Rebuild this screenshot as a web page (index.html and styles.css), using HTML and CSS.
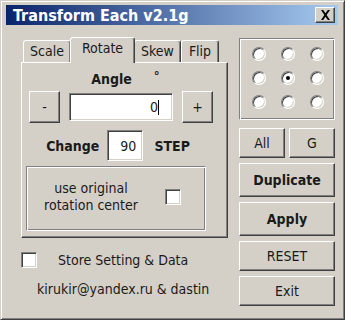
FILE: index.html
```html
<!DOCTYPE html>
<html lang="en">
<head>
  <meta charset="UTF-8">
  <title>Transform Each v2.1g</title>
  <link rel="stylesheet" href="styles.css">
</head>
<body>
  <div class="window">
    <!-- Barre de titre -->
    <div class="titlebar">
      <span class="title">Transform Each v2.1g</span>
      <span class="close">
        <svg width="11" height="10" viewBox="0 0 11 10"><path d="M1 0h2.2l2.3 3.3L7.8 0H10L6.6 5 10 10H7.8L5.5 6.7 3.2 10H1l3.4-5z" fill="#000"/></svg>
      </span>
    </div>

    <div class="content">
      <div class="left">
        <div class="tabs">
          <div class="tab tab-scale">Scale</div>
          <div class="tab active">Rotate</div>
          <div class="tab tab-skew">Skew</div>
          <div class="tab tab-flip">Flip</div>
        </div>
        <div class="pane">
          <div class="angle-row">
            <span class="bold">Angle</span>
            <span class="deg">°</span>
          </div>
          <div class="step-row">
            <div class="btn pm">-</div>
            <div class="field angle-field">0<span class="caret"></span></div>
            <div class="btn pm">+</div>
          </div>
          <div class="change-row">
            <span class="bold">Change</span>
            <div class="field step-field">90</div>
            <span class="bold">STEP</span>
          </div>
          <div class="group">
            <span class="group-text">use original<br>rotation center</span>
            <span class="check"></span>
          </div>
        </div>
        <div class="store">
          <span class="check"></span>
          <span>Store Setting &amp; Data</span>
        </div>
        <div class="credit">kirukir@yandex.ru &amp; dastin</div>
      </div>

      <div class="right">
        <div class="radios">
          <span class="radio"></span><span class="radio"></span><span class="radio"></span>
          <span class="radio"></span><span class="radio on"></span><span class="radio"></span>
          <span class="radio"></span><span class="radio"></span><span class="radio"></span>
        </div>
        <div class="pair">
          <div class="btn half">All</div>
          <div class="btn half">G</div>
        </div>
        <div class="btn full tall bold">Duplicate</div>
        <div class="btn full tall bold">Apply</div>
        <div class="btn full">RESET</div>
        <div class="btn full">Exit</div>
      </div>
    </div>
  </div>
</body>
</html>
```

FILE: styles.css
```css
* {
  margin: 0;
  padding: 0;
  box-sizing: border-box;
}

body {
  background: #fff;
  font-family: "DejaVu Sans Condensed", "DejaVu Sans", sans-serif;
  font-size: 14px;
  color: #1a1a1a;
}

/* Fenêtre */
.window {
  width: 345px;
  height: 320px;
  background: #d4d0c8;
  border: 1px solid;
  border-color: #d4d0c8 #404040 #404040 #d4d0c8;
  box-shadow: inset 1px 1px #fff, inset -1px -1px #808080;
  padding: 4px 6px 0 5px;
}

.titlebar {
  height: 20px;
  background: linear-gradient(90deg, #0a246a, #a6caf0);
  display: flex;
  align-items: center;
  justify-content: space-between;
  padding: 0 3px 0 7px;
}

.title {
  color: #fff;
  font-weight: bold;
  font-size: 16px;
}

.close {
  width: 20px;
  height: 16px;
  background: #d4d0c8;
  border: 1px solid;
  border-color: #fff #404040 #404040 #fff;
  box-shadow: inset -1px -1px #808080;
  display: flex;
  align-items: center;
  justify-content: center;
}

.content {
  display: flex;
  padding-left: 15px;
}

.bold {
  font-weight: bold;
  font-size: 14px;
}

/* Colonne gauche */
.left {
  width: 207px;
}

.tabs {
  display: flex;
  align-items: flex-end;
  height: 37px;
  padding-left: 2px;
}

.tab {
  height: 22px;
  border: 1px solid;
  border-bottom: none;
  border-color: #fff #404040 #fff #fff;
  box-shadow: inset -1px 0 #808080;
  border-radius: 3px 3px 0 0;
  padding: 2px 0 0;
  text-align: center;
}

.tab-scale { width: 48px; }
.tab-skew { width: 47px; }
.tab-flip { width: 38px; }

.tab.active {
  width: 65px;
  height: 26px;
  margin: 0 -1px -1px;
  background: #d4d0c8;
  position: relative;
  z-index: 1;
}

.pane {
  height: 176px;
  border: 1px solid;
  border-color: #fff #404040 #404040 #fff;
  box-shadow: inset -1px -1px #808080;
  display: flex;
  flex-direction: column;
  align-items: center;
  padding-top: 8px;
}

.angle-row {
  display: flex;
  gap: 22px;
  height: 18px;
  margin-left: 2px;
}

.deg {
  font-weight: bold;
  font-size: 13px;
  margin-top: -3px;
}

.step-row {
  display: flex;
  align-items: center;
  gap: 9px;
  margin-top: 2px;
  margin-left: -7px;
}

.btn {
  background: #d4d0c8;
  border: 1px solid;
  border-color: #fff #404040 #404040 #fff;
  box-shadow: inset -1px -1px #808080;
  display: flex;
  align-items: center;
  justify-content: center;
}

.pm {
  width: 31px;
  height: 32px;
}

.field {
  background: #fff;
  border: 1px solid;
  border-color: #808080 #fff #fff #808080;
  box-shadow: inset 1px 1px #404040, inset -1px -1px #d4d0c8;
  display: flex;
  align-items: center;
  justify-content: flex-end;
}

.angle-field {
  width: 104px;
  height: 28px;
  padding-right: 13px;
}

.caret {
  width: 1px;
  height: 15px;
  background: #000;
}

.change-row {
  display: flex;
  align-items: center;
  gap: 8px;
  margin-top: 7px;
  margin-left: -13px;
}

.step-field {
  width: 36px;
  height: 31px;
  padding-right: 6px;
  margin-right: 3px;
}

.group {
  width: 180px;
  height: 65px;
  margin-top: 5px;
  margin-left: -17px;
  border: 1px solid;
  border-color: #808080 #fff #fff #808080;
  box-shadow: inset 1px 1px #fff, inset -1px -1px #808080;
  display: flex;
  align-items: center;
  padding: 0 0 4px 12px;
}

.group-text {
  text-align: center;
  line-height: 17px;
  width: 104px;
  margin-right: 22px;
}

.check {
  width: 16px;
  height: 16px;
  background: #fff;
  border: 1px solid;
  border-color: #808080 #fff #fff #808080;
  box-shadow: inset 1px 1px #404040, inset -1px -1px #d4d0c8;
}

.store {
  display: flex;
  align-items: center;
  gap: 21px;
  margin-top: 14px;
}

.credit {
  margin-top: 13px;
  margin-left: 16px;
}

/* Colonne droite */
.right {
  width: 96px;
  margin-left: 11px;
  padding-top: 13px;
  display: flex;
  flex-direction: column;
}

.radios {
  height: 82px;
  border: 1px solid;
  border-color: #808080 #fff #fff #808080;
  box-shadow: inset 1px 1px #fff, inset -1px -1px #808080;
  display: grid;
  grid-template-columns: repeat(3, 14px);
  grid-auto-rows: 14px;
  column-gap: 15px;
  row-gap: 10px;
  padding: 8px 0 0 12px;
}

.radio {
  width: 14px;
  height: 14px;
  border-radius: 50%;
  background: #fff;
  border: 1px solid;
  border-color: #808080 #fff #fff #808080;
  box-shadow: inset 1px 1px #404040, inset -1px -1px #d4d0c8;
  display: flex;
  align-items: center;
  justify-content: center;
}

.radio.on::after {
  content: "";
  width: 4px;
  height: 4px;
  border-radius: 50%;
  background: #000;
}

.pair {
  display: flex;
  justify-content: space-between;
  margin-top: 8px;
}

.half {
  width: 46px;
  height: 30px;
}

.full {
  height: 30px;
  margin-top: 5px;
}

.tall {
  height: 34px;
}
```
